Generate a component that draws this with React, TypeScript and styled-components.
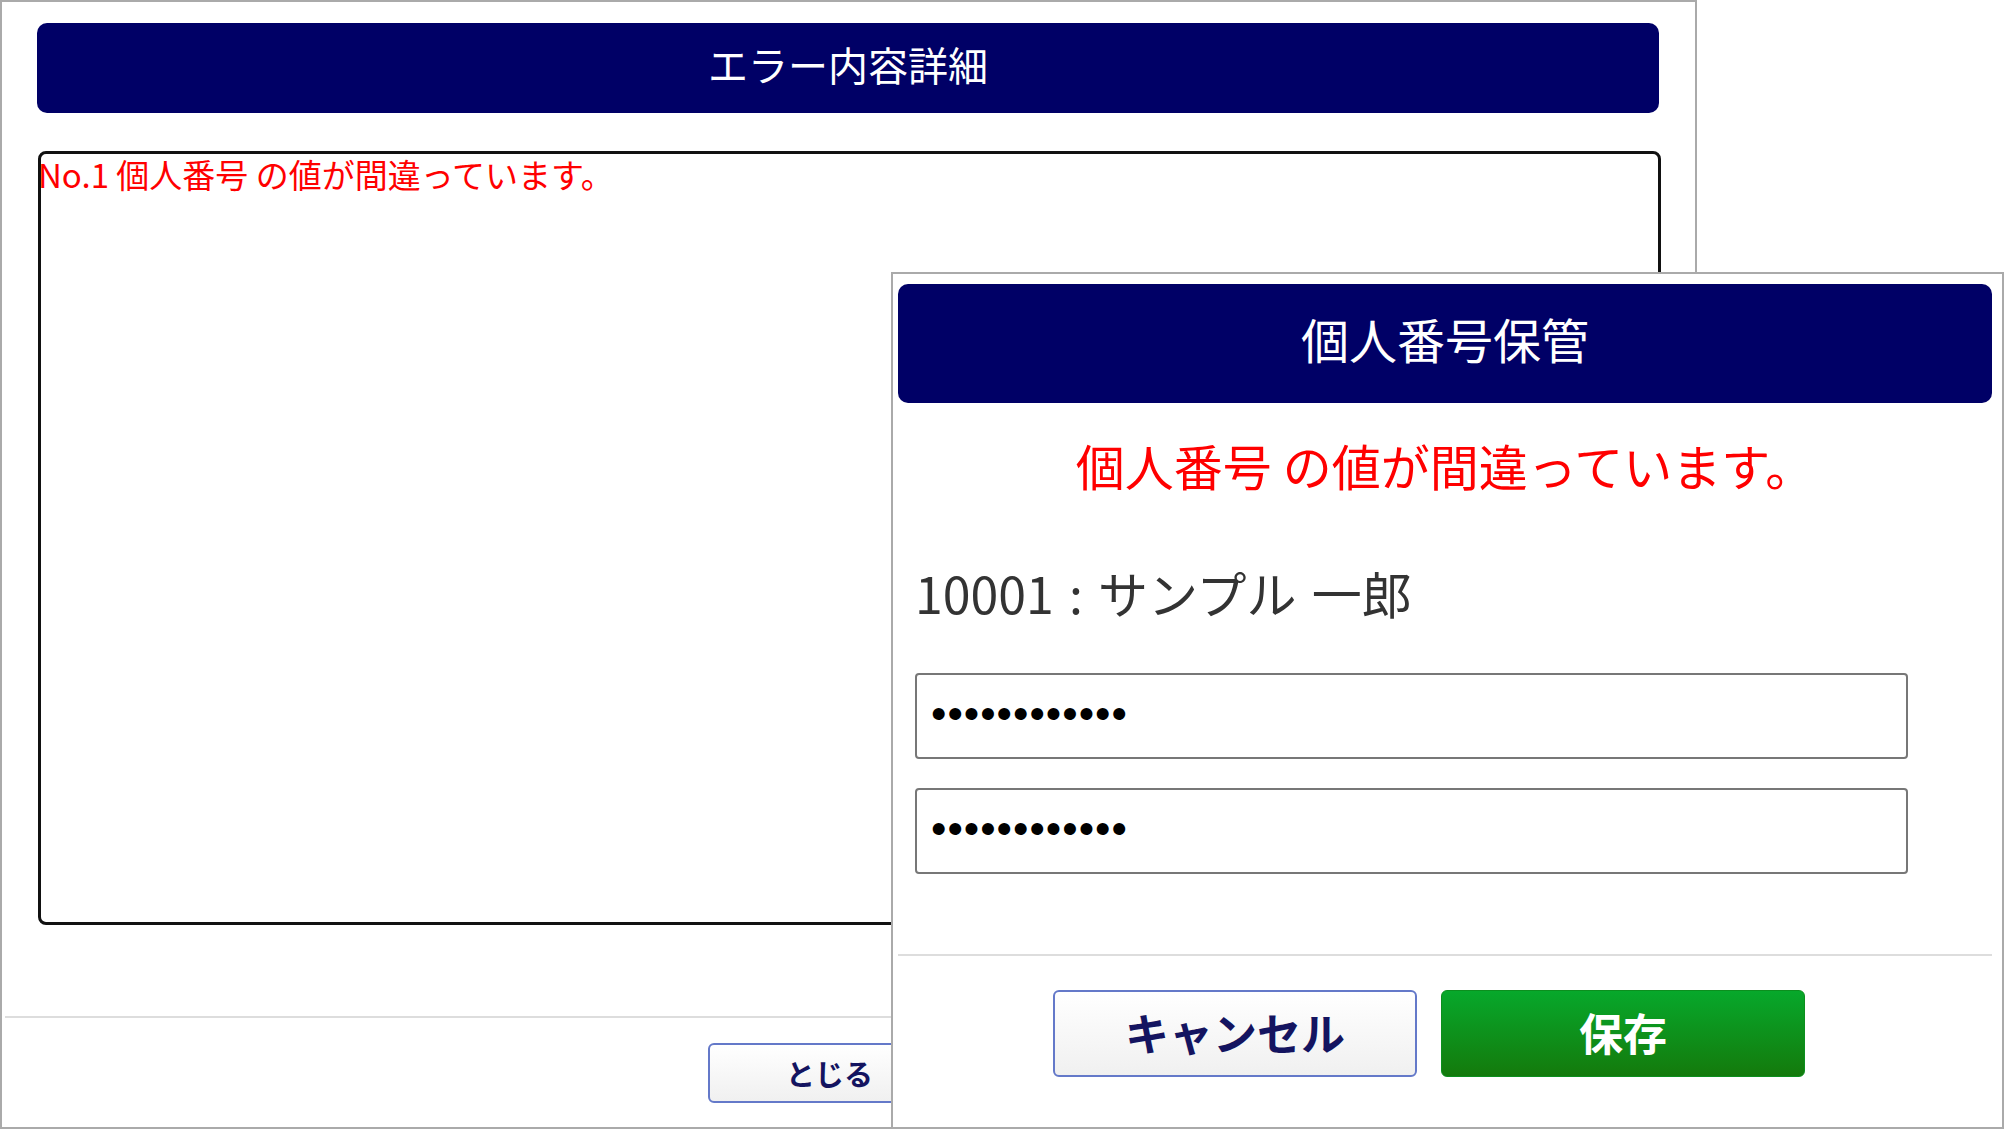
import React from 'react';
import styled, { createGlobalStyle } from 'styled-components';

const GlobalStyle = createGlobalStyle`
    html, body {
        margin: 0;
        padding: 0;
        background: #FFFFFF;
    }
    * {
        box-sizing: border-box;
    }
`

const FONT = `"Noto Sans CJK JP", "Noto Sans", sans-serif`;

const Stage = styled.div`
    position: relative;
    width: 2004px;
    height: 1129px;
    overflow: hidden;
    background: #FFFFFF;
    font-family: ${FONT};
`
const Window = styled.div`
    width: 1697px;
    height: 1129px;
    border: 2px solid #AAAAAA;
    display: flex;
    flex-direction: column;
    padding-top: 21px;
`
const TitleBar = styled.div<{ $height: number; $size: number; $lift: number }>`
    height: ${(p) => p.$height}px;
    background: #000066;
    border-radius: 10px;
    display: flex;
    align-items: center;
    justify-content: center;
    padding-bottom: ${(p) => p.$lift}px;
    color: #FFFFFF;
    font-size: ${(p) => p.$size}px;
    font-weight: 400;
`
const WindowBody = styled.div`
    padding: 0 36px 0 35px;
`
const DetailBox = styled.div`
    margin-top: 38px;
    height: 774px;
    margin-left: 1px;
    margin-right: -2px;
    border: 3px solid #111111;
    border-radius: 8px;
    padding-top: 1px;
`
const ErrorLine = styled.div`
    margin-left: -3px;
    color: #FF0000;
    font-size: 33px;
    line-height: 38px;
    white-space: nowrap;
`
const Divider = styled.hr<{ $margin: string }>`
    border: none;
    border-top: 2px solid #DDDDDD;
    margin: ${(p) => p.$margin};
`
const WindowFooter = styled.div`
    display: flex;
    justify-content: center;
    padding-right: 38px;
    margin-top: 25px;
`
const FooterButton = styled.button`
    width: 244px;
    height: 60px;
    border: 2px solid #6479C9;
    border-radius: 6px;
    background: linear-gradient(#FFFFFF, #F0F0F0);
    color: #141460;
    font-family: ${FONT};
    font-size: 29px;
    font-weight: 700;
    padding: 0;
`
const Dialog = styled.div`
    position: absolute;
    left: 891px;
    top: 272px;
    width: 1113px;
    height: 857px;
    border: 2px solid #AAAAAA;
    background: #FFFFFF;
    padding: 10px 10px 0 5px;
`
const Message = styled.div`
    margin-top: 34px;
    text-align: center;
    color: #FF0000;
    font-size: 49px;
    line-height: 56px;
`
const Form = styled.div`
    padding-left: 17px;
    padding-right: 84px;
`
const Employee = styled.div`
    margin-top: 70px;
    color: #333333;
    font-size: 50px;
    line-height: 58px;
    white-space: nowrap;
    word-spacing: 4px;
`
const SecretInput = styled.input<{ $top: number }>`
    display: block;
    width: 993px;
    height: 86px;
    margin-top: ${(p) => p.$top}px;
    border: 2px solid #777777;
    border-radius: 4px;
    padding: 0 14px 4px;
    font-family: "Liberation Sans", Arial, sans-serif;
    font-size: 44px;
    letter-spacing: 1px;
    color: #000000;
    background: #FFFFFF;
    outline: none;
`
const DialogFooter = styled.div`
    display: flex;
    justify-content: center;
    gap: 24px;
    padding-right: 32px;
`
const ActionButton = styled.button<{ $primary?: boolean }>`
    width: 364px;
    height: 87px;
    border-radius: 6px;
    font-family: ${FONT};
    font-size: 44px;
    font-weight: 700;
    padding: 0 0 3px;
    border: ${(p) => (p.$primary ? '1px solid #0C8F1E' : '2px solid #6479C9')};
    background: ${(p) =>
        p.$primary ? 'linear-gradient(#07A82B, #147A0C)' : 'linear-gradient(#FFFFFF, #F0F0F0)'};
    color: ${(p) => (p.$primary ? '#FFFFFF' : '#141460')};
`

const App = () => {
    return (
        <Stage>
            <GlobalStyle />
            <Window>
                <WindowBody>
                    <TitleBar $height={90} $size={40} $lift={8}>エラー内容詳細</TitleBar>
                    <DetailBox>
                        <ErrorLine>No.1 個人番号 の値が間違っています。</ErrorLine>
                    </DetailBox>
                </WindowBody>
                <Divider $margin="91px 3px 0" />
                <WindowFooter>
                    <FooterButton>とじる</FooterButton>
                </WindowFooter>
            </Window>

            <Dialog>
                <TitleBar $height={119} $size={48} $lift={12}>個人番号保管</TitleBar>
                <Message>個人番号 の値が間違っています。</Message>
                <Form>
                    <Employee>10001 : サンプル 一郎</Employee>
                    <SecretInput $top={52} type="password" defaultValue="123456789012" readOnly />
                    <SecretInput $top={29} type="password" defaultValue="123456789012" readOnly />
                </Form>
                <Divider $margin="80px 0 34px" />
                <DialogFooter>
                    <ActionButton>キャンセル</ActionButton>
                    <ActionButton $primary>保存</ActionButton>
                </DialogFooter>
            </Dialog>
        </Stage>
    );
}
export default App;
